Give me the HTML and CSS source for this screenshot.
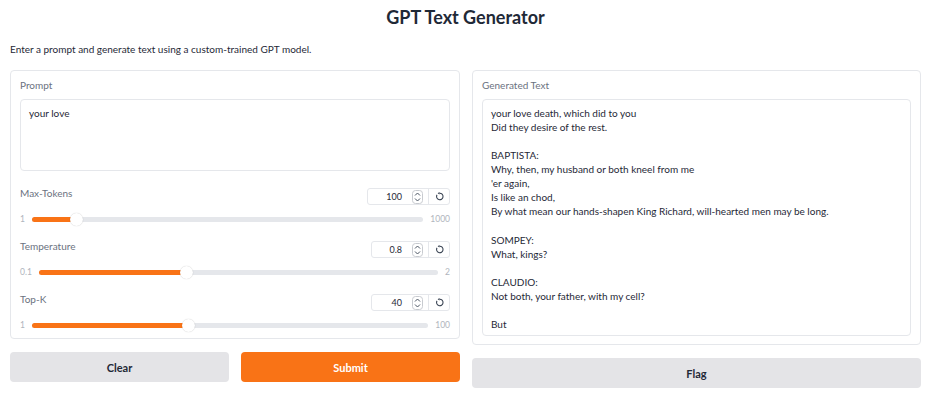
FILE: index.html
```html
<!DOCTYPE html>
<html>
<head>
<meta charset="utf-8">
<link rel="stylesheet" href="styles.css">
</head>
<body>
<div class="app">
  <h1 class="title">GPT Text Generator</h1>
  <p class="desc">Enter a prompt and generate text using a custom-trained GPT model.</p>
  <div class="cols">
    <div class="col">
      <div class="panel left">
        <div class="label">Prompt</div>
        <div class="textbox prompt">your love</div>

        <div class="slider-block first">
          <div class="slider-head">
            <span class="label">Max-Tokens</span>
            <div class="num wide">
              <span class="val">100</span>
              <span class="spin"><svg width="11" height="14" viewBox="0 0 11 14"><rect x="0.5" y="0.5" width="10" height="13" rx="3" fill="none" stroke="#c8cbd0"/><path d="M3 5.5 L5.5 3 L8 5.5" fill="none" stroke="#4b5563" stroke-width="1"/><path d="M3 8.5 L5.5 11 L8 8.5" fill="none" stroke="#4b5563" stroke-width="1"/></svg></span>
              <span class="reset"><svg width="9" height="9" viewBox="0 0 10 10"><path d="M2.2 3.2 A3.6 3.6 0 1 0 5 1.4" fill="none" stroke="#374151" stroke-width="1.2"/><path d="M5 0 L5 2.9 L2.9 1.4 Z" fill="#374151"/></svg></span>
            </div>
          </div>
          <div class="slider-row">
            <span class="minmax min">1</span>
            <div class="track"><div class="fill" style="width:11.3%"></div><div class="thumb" style="left:11.3%"></div></div>
            <span class="minmax max">1000</span>
          </div>
        </div>

        <div class="slider-block">
          <div class="slider-head">
            <span class="label">Temperature</span>
            <div class="num">
              <span class="val">0.8</span>
              <span class="spin"><svg width="11" height="14" viewBox="0 0 11 14"><rect x="0.5" y="0.5" width="10" height="13" rx="3" fill="none" stroke="#c8cbd0"/><path d="M3 5.5 L5.5 3 L8 5.5" fill="none" stroke="#4b5563" stroke-width="1"/><path d="M3 8.5 L5.5 11 L8 8.5" fill="none" stroke="#4b5563" stroke-width="1"/></svg></span>
              <span class="reset"><svg width="9" height="9" viewBox="0 0 10 10"><path d="M2.2 3.2 A3.6 3.6 0 1 0 5 1.4" fill="none" stroke="#374151" stroke-width="1.2"/><path d="M5 0 L5 2.9 L2.9 1.4 Z" fill="#374151"/></svg></span>
            </div>
          </div>
          <div class="slider-row">
            <span class="minmax min">0.1</span>
            <div class="track"><div class="fill" style="width:37.1%"></div><div class="thumb" style="left:37.1%"></div></div>
            <span class="minmax max">2</span>
          </div>
        </div>

        <div class="slider-block">
          <div class="slider-head">
            <span class="label">Top-K</span>
            <div class="num">
              <span class="val">40</span>
              <span class="spin"><svg width="11" height="14" viewBox="0 0 11 14"><rect x="0.5" y="0.5" width="10" height="13" rx="3" fill="none" stroke="#c8cbd0"/><path d="M3 5.5 L5.5 3 L8 5.5" fill="none" stroke="#4b5563" stroke-width="1"/><path d="M3 8.5 L5.5 11 L8 8.5" fill="none" stroke="#4b5563" stroke-width="1"/></svg></span>
              <span class="reset"><svg width="9" height="9" viewBox="0 0 10 10"><path d="M2.2 3.2 A3.6 3.6 0 1 0 5 1.4" fill="none" stroke="#374151" stroke-width="1.2"/><path d="M5 0 L5 2.9 L2.9 1.4 Z" fill="#374151"/></svg></span>
            </div>
          </div>
          <div class="slider-row">
            <span class="minmax min">1</span>
            <div class="track"><div class="fill" style="width:39.4%"></div><div class="thumb" style="left:39.4%"></div></div>
            <span class="minmax max">100</span>
          </div>
        </div>
      </div>
      <div class="btn-row">
        <button class="btn secondary">Clear</button>
        <button class="btn primary">Submit</button>
      </div>
    </div>

    <div class="col">
      <div class="panel right">
        <div class="label">Generated Text</div>
        <div class="textbox output">your love death, which did to you
Did they desire of the rest.

BAPTISTA:
Why, then, my husband or both kneel from me
'er again,
Is like an chod,
By what mean our hands-shapen King Richard, will-hearted men may be long.

SOMPEY:
What, kings?

CLAUDIO:
Not both, your father, with my cell?

But</div>
      </div>
      <div class="btn-row">
        <button class="btn secondary">Flag</button>
      </div>
    </div>
  </div>
</div>
</body>
</html>
```

FILE: styles.css
```css
* { box-sizing: border-box; }
body {
  margin: 0;
  background: #ffffff;
  font-family: Lato, "Open Sans", sans-serif;
  color: #1f2937;
}
.app {
  width: 911px;
  margin-left: 10px;
}
.title {
  margin: 0;
  padding-top: 5px;
  height: 26px;
  line-height: 24px;
  text-align: center;
  font-size: 18px;
  font-weight: 700;
  color: #1f2937;
}
.desc {
  margin: 16px 0 0 0;
  font-size: 10px;
  line-height: 14px;
  color: #1f2937;
}
.cols {
  display: flex;
  gap: 12px;
  margin-top: 14px;
  align-items: flex-start;
}
.col {
  display: flex;
  flex-direction: column;
  gap: 13px;
}
.col:first-child { width: 450px; }
.col:last-child { width: 449px; }
.panel {
  border: 1px solid #e5e7eb;
  border-radius: 4px;
  padding: 7px 9px 7px 9px;
  background: #fff;
}
.panel.left { height: 269px; }
.panel.right { height: 275px; }
.label {
  font-size: 10px;
  line-height: 14px;
  color: #6b7280;
}
.textbox {
  margin-top: 7px;
  border: 1px solid #e5e7eb;
  border-radius: 4px;
  padding: 6px 8px;
  font-size: 10px;
  line-height: 14.07px;
  color: #1f2937;
  white-space: pre-wrap;
}
.textbox.prompt { height: 72px; }
.textbox.output { height: 237px; }

.slider-block { margin-top: 15px; }
.slider-block.first { margin-top: 17px; }
.slider-head {
  display: flex;
  justify-content: space-between;
  align-items: flex-start;
  height: 17px;
}
.slider-head .label { margin-top: -2px; }
.num {
  display: flex;
  align-items: center;
  width: 79px;
  height: 17px;
  border: 1px solid #e5e7eb;
  border-radius: 3px;
  font-size: 9px;
  color: #1f2937;
}
.num.wide { width: 83px; }
.num .val {
  flex: 1;
  text-align: right;
  padding-right: 10px;
}
.num .spin {
  display: flex;
  width: 11px;
  margin-right: 5px;
}
.num .reset {
  width: 21px;
  height: 100%;
  border-left: 1px solid #e5e7eb;
  display: flex;
  align-items: center;
  justify-content: center;
}
.slider-row {
  display: flex;
  align-items: center;
  height: 14px;
  margin-top: 7px;
  gap: 7px;
}
.minmax {
  font-size: 8.5px;
  color: #b0b5bd;
  line-height: 10px;
}
.track {
  position: relative;
  flex: 1;
  height: 5px;
  border-radius: 3px;
  background: #e5e7eb;
}
.fill {
  height: 5px;
  border-radius: 3px;
  background: #f97316;
}
.thumb {
  position: absolute;
  top: 50%;
  width: 13px;
  height: 13px;
  margin-left: -6.5px;
  margin-top: -6.5px;
  border-radius: 50%;
  background: #fff;
  box-shadow: 0 0 1px rgba(0,0,0,0.25);
}
.btn-row {
  display: flex;
  gap: 12px;
}
.btn {
  flex: 1;
  height: 30px;
  border: none;
  border-radius: 4px;
  font-family: Lato, "Open Sans", sans-serif;
  font-size: 11px;
  font-weight: 700;
}
.btn.secondary { background: #e4e4e7; color: #1f2937; }
.btn.primary { background: #f97316; color: #ffffff; }
```
